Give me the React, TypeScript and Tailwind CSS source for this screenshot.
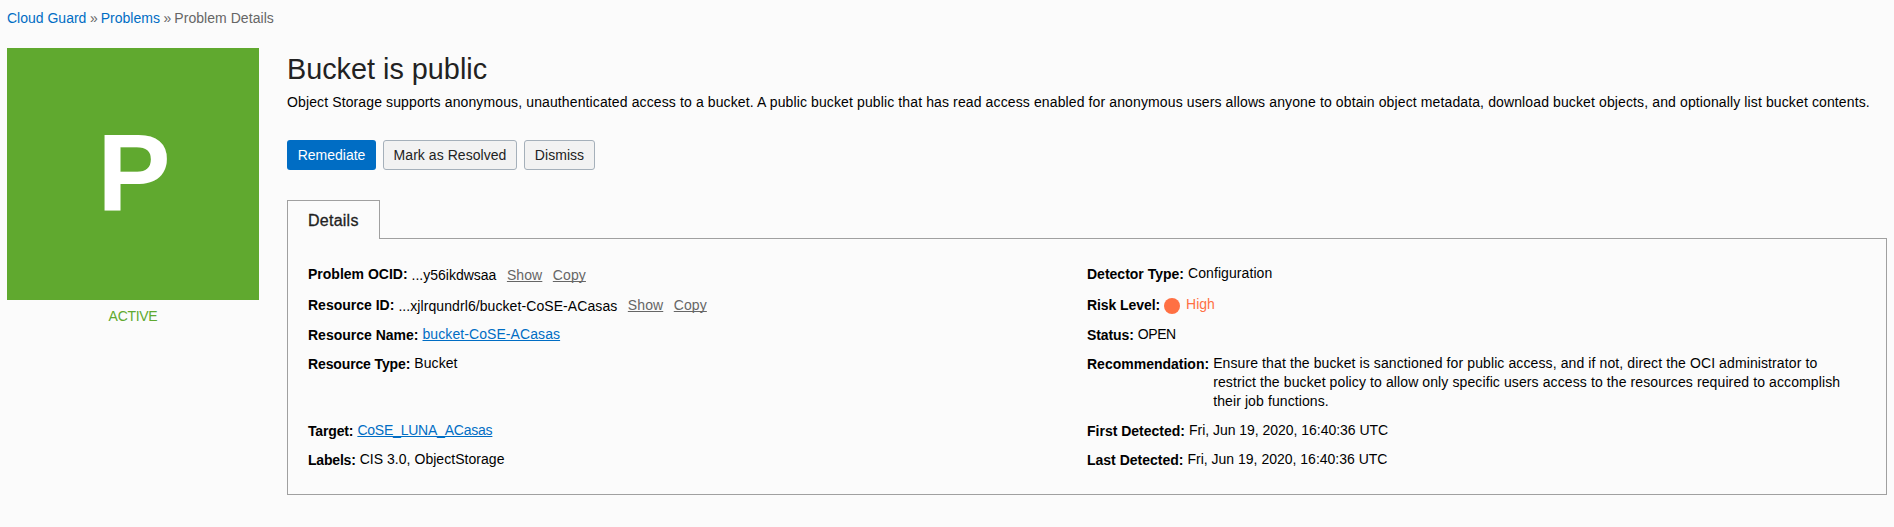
import type { ReactNode } from "react";

type FieldProps = { label: string; labelClass?: string; children: ReactNode };

function Field({ label, labelClass = "", children }: FieldProps) {
  return (
    <div className="flex items-start">
      <dt className={`mt-px mr-1 shrink-0 font-bold ${labelClass}`}>{label}:</dt>
      <dd className="flex items-start whitespace-nowrap">{children}</dd>
    </div>
  );
}

const underlined = "underline decoration-1 underline-offset-1 [text-decoration-skip-ink:none]";

function TextLink({ className = "", children }: { className?: string; children: ReactNode }) {
  return (
    <a href="#" className={`text-[#006dc4] ${underlined} ${className}`}>
      {children}
    </a>
  );
}

function Action({ className = "", children }: { className?: string; children: ReactNode }) {
  return (
    <button type="button" className={`ml-[10.5px] tracking-[0.1px] text-[#666] ${underlined} ${className}`}>
      {children}
    </button>
  );
}

const plainButton = "h-[30px] rounded-[3px] border border-[#a5b0ba] bg-[#f2f2f2] leading-5 tracking-[0.05px] text-[#222]";

export default function App() {
  return (
    <div className="min-h-screen bg-[#fbfbfb] px-[7px] pt-[9px] font-['Liberation_Sans',Arial,sans-serif] text-[14px] leading-[19px] text-black">
      <nav className="flex gap-[3.7px] text-[#666]">
        <a href="#" className="text-[#006dc4]">Cloud Guard</a>
        <span className="w-[7px]">»</span>
        <a href="#" className="text-[#006dc4]">Problems</a>
        <span className="w-[7px]">»</span>
        <span className="tracking-[0.05px]">Problem Details</span>
      </nav>

      <div className="mt-5 flex gap-7">
        <aside className="w-[252px] shrink-0 text-center text-[#60a92f]">
          <div className="flex h-[252px] items-center justify-center bg-[#60a92f] pb-[3px] pl-[2px] text-[110px] leading-none font-bold text-white">
            P
          </div>
          <div className="mt-[7px] tracking-[-0.3px]">ACTIVE</div>
        </aside>

        <main className="min-w-0 grow">
          <h1 className="pt-px text-[28.8px] leading-10 text-[#222]">Bucket is public</h1>
          <p className="mt-1 tracking-[0.12px] whitespace-nowrap">
            Object Storage supports anonymous, unauthenticated access to a bucket. A public bucket public that has
            read access enabled for anonymous users allows anyone to obtain object metadata, download bucket objects,
            and optionally list bucket contents.
          </p>

          <div className="mt-7 flex gap-[7px]">
            <button type="button" className="h-[30px] w-[89px] rounded-[3px] bg-[#006dc4] leading-5 text-white">
              Remediate
            </button>
            <button type="button" className={`w-[134px] ${plainButton}`}>Mark as Resolved</button>
            <button type="button" className={`w-[71px] ${plainButton}`}>Dismiss</button>
          </div>

          <div className="mt-[30px] flex">
            <div className="relative z-10 -mb-px flex h-[39px] w-[93px] items-center border border-b-0 border-[#a0a0a0] bg-[#fbfbfb] pl-5 text-[16px] tracking-[0.25px] text-[#222] [-webkit-text-stroke:0.3px]">
              Details
            </div>
          </div>

          <dl className="grid grid-cols-2 grid-rows-[31px_30px_29px_67px_29px_19px] border border-[#a0a0a0] px-5 py-[25px]">
            <Field label="Problem OCID">
              <span className="mt-0.5">...y56ikdwsaa</span>
              <Action className="mt-0.5">Show</Action>
              <Action className="mt-0.5">Copy</Action>
            </Field>
            <Field label="Detector Type">
              <span className="tracking-[0.08px]">Configuration</span>
            </Field>

            <Field label="Resource ID">
              <span className="mt-0.5 tracking-[0.08px]">...xjlrqundrl6/bucket-CoSE-ACasas</span>
              <Action className="mt-px">Show</Action>
              <Action className="mt-px">Copy</Action>
            </Field>
            <Field label="Risk Level" labelClass="tracking-[-0.08px]">
              <span className="mt-[3px] mr-1.5 size-4 rounded-full bg-[#ff7043]" />
              <span className="text-[#ff7043]">High</span>
            </Field>

            <Field label="Resource Name">
              <TextLink className="tracking-[0.08px]">bucket-CoSE-ACasas</TextLink>
            </Field>
            <Field label="Status" labelClass="tracking-[-0.1px]">
              <span className="tracking-[-0.4px]">OPEN</span>
            </Field>

            <Field label="Resource Type" labelClass="tracking-[-0.13px]">
              <span className="tracking-[0.1px]">Bucket</span>
            </Field>
            <Field label="Recommendation">
              <span className="tracking-[0.105px]">
                Ensure that the bucket is sanctioned for public access, and if not, direct the OCI administrator to
                <br />
                restrict the bucket policy to allow only specific users access to the resources required to accomplish
                <br />
                their job functions.
              </span>
            </Field>

            <Field label="Target" labelClass="tracking-[-0.15px]">
              <TextLink className="tracking-[-0.22px]">CoSE_LUNA_ACasas</TextLink>
            </Field>
            <Field label="First Detected">
              <span className="tracking-[-0.03px]">Fri, Jun 19, 2020, 16:40:36 UTC</span>
            </Field>

            <Field label="Labels" labelClass="tracking-[-0.2px]">
              <span className="tracking-[0.04px]">CIS 3.0, ObjectStorage</span>
            </Field>
            <Field label="Last Detected">
              <span>Fri, Jun 19, 2020, 16:40:36 UTC</span>
            </Field>
          </dl>
        </main>
      </div>
    </div>
  );
}
